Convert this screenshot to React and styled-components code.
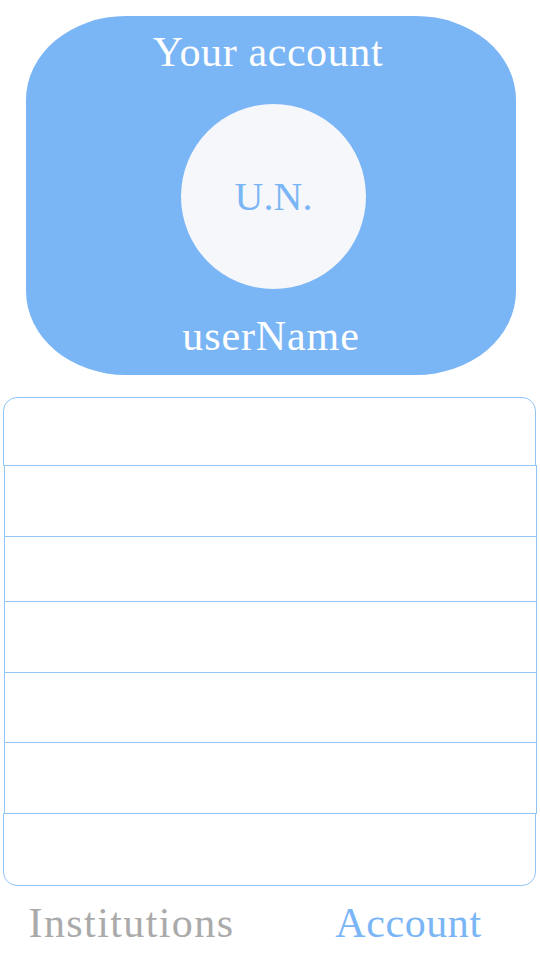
import styled, { createGlobalStyle } from "styled-components"

const BLUE = "#7ab5f5"
const LINE = "#93c5f5"

const GlobalStyle = createGlobalStyle`
    html, body {
        margin: 0;
        padding: 0;
        background: #ffffff;
        font-family: "Liberation Serif", "Times New Roman", serif;
    }
`

const Page = styled.div`
    width: 540px;
    height: 960px;
    display: flex;
    flex-direction: column;
    overflow: hidden;
`

const Card = styled.div`
    margin: 16px 24px 0 26px;
    height: 359px;
    box-sizing: border-box;
    padding: 12px 0 15px;
    background: ${BLUE};
    border-radius: 100px / 84px;
    display: flex;
    flex-direction: column;
    align-items: center;
    color: #ffffff;

    .title {
        font-size: 42px;
        line-height: 48px;
        letter-spacing: 0.6px;
        margin-right: 6px;
    }
    .name {
        font-size: 42px;
        line-height: 48px;
        letter-spacing: 0.9px;
        margin-top: 23px;
    }
`

const Avatar = styled.div`
    width: 185px;
    height: 185px;
    margin: 28px 0 0 5px;
    border-radius: 50%;
    background: #f5f7fa;
    color: ${BLUE};
    font-size: 40px;
    display: flex;
    align-items: center;
    justify-content: center;
`

const List = styled.div`
    margin: 22px 0 0 3px;
    width: 534px;
    display: flex;
    flex-direction: column;
`

const Row = styled.div`
    box-sizing: border-box;
    height: ${p => p.$h}px;
    width: 533px;
    border: 1px solid ${LINE};
    margin-top: -1px;
    margin-left: ${p => (p.$edge ? 0 : 1)}px;
    border-radius: ${p =>
        p.$edge === "top" ? "14px 14px 0 0" : p.$edge === "bottom" ? "0 0 14px 14px" : "0"};

    &:first-child {
        margin-top: 0;
    }
`

const Tabs = styled.div`
    display: flex;
    margin-top: 13px;
`

const Tab = styled.div`
    flex: 1;
    text-align: center;
    font-size: 42px;
    line-height: 48px;
    color: ${p => (p.$active ? BLUE : "#aaaaaa")};
    letter-spacing: ${p => (p.$active ? 0.6 : 1.4)}px;
    padding: ${p => (p.$active ? "0 0 0 6px" : "0 8px 0 0")};
`

const rows = [69, 72, 66, 72, 71, 72, 73]

const App = () => {
    return (
        <Page>
            <GlobalStyle />
            <Card>
                <div className="title">Your account</div>
                <Avatar>U.N.</Avatar>
                <div className="name">userName</div>
            </Card>
            <List>
                {rows.map((h, i) => (
                    <Row
                        key={i}
                        $h={h}
                        $edge={i === 0 ? "top" : i === rows.length - 1 ? "bottom" : null}
                    />
                ))}
            </List>
            <Tabs>
                <Tab>Institutions</Tab>
                <Tab $active>Account</Tab>
            </Tabs>
        </Page>
    )
}

export default App
